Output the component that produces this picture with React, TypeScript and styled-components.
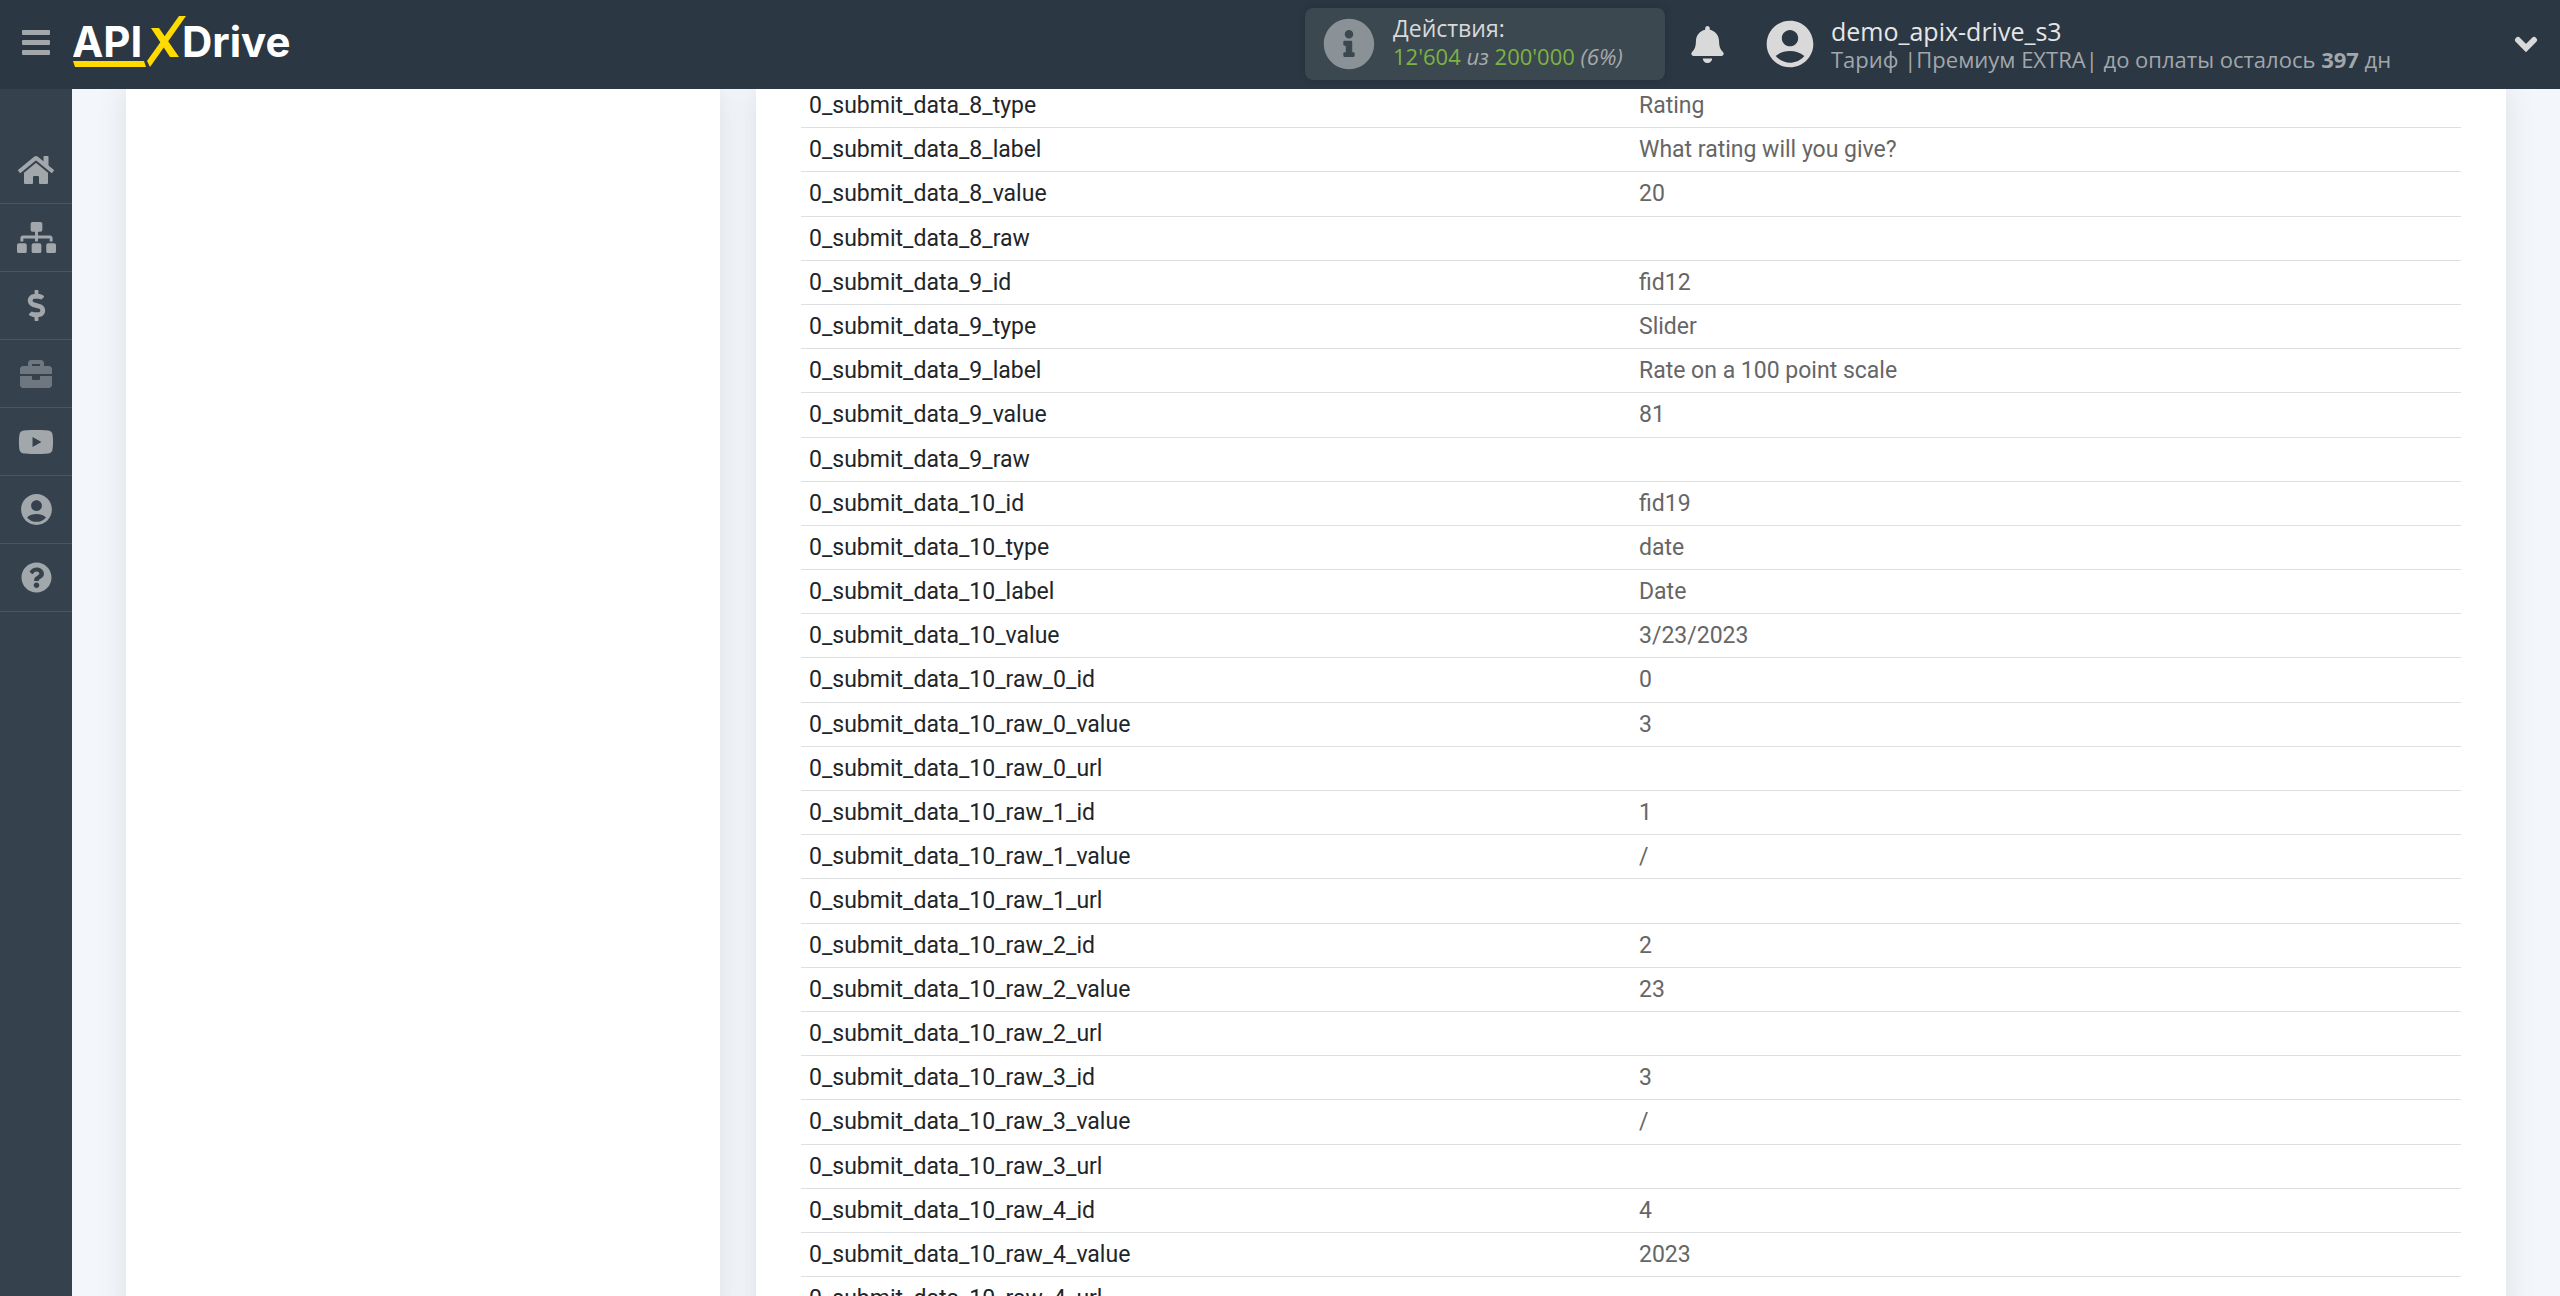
import React from "react";
import styled, { createGlobalStyle } from "styled-components";
import {
  FaHome,
  FaSitemap,
  FaDollarSign,
  FaBriefcase,
  FaYoutube,
  FaQuestionCircle,
  FaInfoCircle,
  FaBell,
} from "react-icons/fa";
import { MdAccountCircle } from "react-icons/md";

const GlobalStyle = createGlobalStyle`
  *, *::before, *::after { box-sizing: border-box; }
  html, body, #root { height: 100%; }
  body {
    margin: 0;
    overflow: hidden;
    background: #f3f6fb;
    font-family: Roboto, "Liberation Sans", sans-serif;
  }
`;

const Page = styled.div`
  height: 100vh;
  display: flex;
  flex-direction: column;
`;

const Header = styled.header`
  flex: none;
  height: 89px;
  display: flex;
  align-items: center;
  padding: 0 22px 1px;
  background: #2b3743;
  font-family: "Open Sans", "Noto Sans", sans-serif;
`;

const Brand = styled.div`
  flex: 1;
  display: flex;
  align-items: center;
`;

const AccountArea = styled.div`
  flex: 0 0 873px;
  display: flex;
  align-items: center;
`;

const IconButton = styled.button`
  display: flex;
  align-items: center;
  justify-content: center;
  padding: 0;
  border: 0;
  background: none;
  color: #d9d9d9;
  cursor: pointer;
`;

const MenuButton = styled(IconButton)`
  width: 28px;
  height: 32px;
  flex-direction: column;
  gap: 5px;
  margin-right: 23px;
  padding-bottom: 4px;
`;

const MenuBar = styled.span`
  width: 28px;
  height: 5px;
  border-radius: 1px;
  background: #a2a7ab;
`;

const Logo = styled.a`
  display: block;
  color: #fff;
  text-decoration: none;
  svg { display: block; }
`;

const Usage = styled.div`
  display: flex;
  align-items: center;
  gap: 18px;
  width: 360px;
  height: 72px;
  padding: 0 18px;
  border-radius: 8px;
  background: #3b4850;
  box-shadow: 0 0 8px rgba(0, 0, 0, 0.15);
  color: #8b9297;
`;

const UsageText = styled.div`
  padding-bottom: 4px;
  font-size: 23px;
  line-height: 28px;
  color: #d9d9d9;
`;

const UsageCount = styled.div`
  font-size: 22px;
  color: #a6a9ac;
`;

const Amount = styled.span`
  color: #7cb342;
`;

const Bell = styled(IconButton)`
  margin-left: 24px;
`;

const Account = styled.div`
  display: flex;
  align-items: center;
  gap: 13px;
  margin-left: 36px;
  color: #d9d9d9;
`;

const AccountText = styled.div`
  padding-top: 2px;
  line-height: 28px;
  white-space: nowrap;
`;

const UserName = styled.div`
  font-size: 25px;
  color: #e6e6e6;
`;

const Plan = styled.div`
  font-size: 22px;
  color: #a2a7ab;
`;

const Expand = styled(IconButton)`
  margin-left: auto;
`;

const Body = styled.div`
  flex: 1;
  min-height: 0;
  display: flex;
`;

const Sidebar = styled.nav`
  flex: none;
  width: 72px;
  padding-top: 47px;
  background: #36414e;
`;

const NavLink = styled.a<{ $dim?: boolean }>`
  display: flex;
  align-items: center;
  justify-content: center;
  height: 68px;
  border-bottom: 1px solid #4a5561;
  color: ${(p) => (p.$dim ? "#6e7780" : "#a2a7ab")};
`;

const Main = styled.main`
  flex: 1;
  min-width: 0;
  display: grid;
  grid-template-columns: 594px 1fr;
  gap: 36px;
  padding: 0 54px;
  overflow: hidden;
`;

const Card = styled.section`
  background: #fff;
  box-shadow: 0 0 30px rgba(0, 0, 0, 0.1);
`;

const DataCard = styled(Card)`
  padding: 0 45px;
`;

const Table = styled.table`
  width: 100%;
  table-layout: fixed;
  border-collapse: separate;
  border-spacing: 0;
  margin-top: -5px;
`;

const cell = `
  padding: 6px 8px 5px;
  border-bottom: 1px solid #dddfe1;
  height: 44px;
  font-size: 23px;
  line-height: 1.4;
  font-weight: 400;
  text-align: left;
  white-space: pre;
`;

const Name = styled.th`
  ${cell}
  color: #212529;
`;

const Value = styled.td`
  ${cell}
  color: #666;
`;

const fields: [string, string][] = [
  ["8_type", "Rating"],
  ["8_label", "What rating will you give?"],
  ["8_value", "20"],
  ["8_raw", ""],
  ["9_id", "fid12"],
  ["9_type", "Slider"],
  ["9_label", "Rate on a 100 point scale"],
  ["9_value", "81"],
  ["9_raw", ""],
  ["10_id", "fid19"],
  ["10_type", "date"],
  ["10_label", "Date"],
  ["10_value", "3/23/2023"],
  ["10_raw_0_id", "0"],
  ["10_raw_0_value", "3"],
  ["10_raw_0_url", ""],
  ["10_raw_1_id", "1"],
  ["10_raw_1_value", "/"],
  ["10_raw_1_url", ""],
  ["10_raw_2_id", "2"],
  ["10_raw_2_value", "23"],
  ["10_raw_2_url", ""],
  ["10_raw_3_id", "3"],
  ["10_raw_3_value", "/"],
  ["10_raw_3_url", ""],
  ["10_raw_4_id", "4"],
  ["10_raw_4_value", "2023"],
  ["10_raw_4_url", ""],
];

const nav = [
  { label: "Главная", icon: <FaHome size={36} /> },
  { label: "Связи", icon: <FaSitemap size={39} /> },
  { label: "Оплата", icon: <FaDollarSign size={31} /> },
  { label: "Портфель", icon: <FaBriefcase size={32} />, dim: true },
  { label: "Видео", icon: <FaYoutube size={36} /> },
  { label: "Профиль", icon: <MdAccountCircle size={37} /> },
  { label: "Помощь", icon: <FaQuestionCircle size={31} /> },
];

export default function App() {
  return (
    <Page>
      <GlobalStyle />
      <Header>
        <Brand>
          <MenuButton aria-label="Меню">
            <MenuBar />
            <MenuBar />
            <MenuBar />
          </MenuButton>
          <Logo href="#" aria-label="APIXDrive">
            <svg width="224" height="56" viewBox="0 0 224 56">
              <g fill="#fff" fontFamily="Inter, sans-serif" fontWeight="700" fontSize="42">
                <text x="-1" y="41">API</text>
                <text x="109" y="41">Drive</text>
              </g>
              <g fill="#ffdb00">
                <path d="M0 45h71l2 6H2z" />
                <path d="M106 0h7L77 51l-3-6z" />
                <path d="M78 12h8l20 29h-9z" />
              </g>
            </svg>
          </Logo>
        </Brand>
        <Usage>
          <FaInfoCircle size={52} />
          <UsageText>
            Действия:
            <UsageCount>
              <Amount>12'604</Amount> <em>из</em> <Amount>200'000</Amount> <em>(6%)</em>
            </UsageCount>
          </UsageText>
        </Usage>
        <AccountArea>
          <Bell aria-label="Уведомления">
            <FaBell size={37} />
          </Bell>
          <Account>
            <MdAccountCircle size={56} />
            <AccountText>
              <UserName>demo_apix-drive_s3</UserName>
              <Plan>
                Тариф |Премиум EXTRA| до оплаты осталось <b>397</b> дн
              </Plan>
            </AccountText>
          </Account>
          <Expand aria-label="Развернуть">
            <svg width="24" height="16" viewBox="0 0 24 16">
              <path
                d="M4 4l8 8 8-8"
                fill="none"
                stroke="currentColor"
                strokeWidth="6"
                strokeLinecap="round"
              />
            </svg>
          </Expand>
        </AccountArea>
      </Header>
      <Body>
        <Sidebar>
          {nav.map((n) => (
            <NavLink key={n.label} href="#" aria-label={n.label} $dim={n.dim}>
              {n.icon}
            </NavLink>
          ))}
        </Sidebar>
        <Main>
          <Card />
          <DataCard>
            <Table>
              <tbody>
                {fields.map(([name, value]) => (
                  <tr key={name}>
                    <Name scope="row">{"0_submit_data_" + name}</Name>
                    <Value>{value}</Value>
                  </tr>
                ))}
              </tbody>
            </Table>
          </DataCard>
        </Main>
      </Body>
    </Page>
  );
}
